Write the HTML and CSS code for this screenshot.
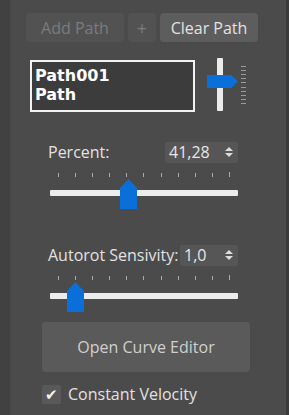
FILE: index.html
```html
<!DOCTYPE html>
<html lang="en">
<head>
    <meta charset="UTF-8">
    <meta name="viewport" content="width=device-width, initial-scale=1.0">
    <title>Path Constraint</title>
    <link rel="stylesheet" href="styles.css">
</head>
<body>
    <div class="panel">
        <div class="path-buttons">
            <button class="btn btn-add" disabled>Add Path</button>
            <button class="btn btn-plus" disabled>+</button>
            <button class="btn btn-clear">Clear Path</button>
        </div>

        <div class="path-row">
            <div class="path-list">
                <div class="path-item">Path001</div>
                <div class="path-item">Path</div>
            </div>
            <div class="vslider">
                <div class="vtrack"></div>
                <div class="vticks">
                    <span></span><span></span><span></span><span></span><span></span><span></span><span></span><span></span><span></span><span></span>
                </div>
                <div class="vthumb"></div>
            </div>
        </div>

        <div class="field-row percent-row">
            <label>Percent:</label>
            <div class="spinner spinner-wide">
                <span class="value">41,28</span>
                <span class="arrows"><i class="up"></i><i class="down"></i></span>
            </div>
        </div>
        <div class="hslider">
            <div class="hticks">
                <span></span><span></span><span></span><span></span><span></span><span></span><span></span><span></span><span></span><span></span><span></span>
            </div>
            <div class="htrack"></div>
            <div class="hthumb" style="left: 70px;"></div>
        </div>

        <div class="field-row autorot-row">
            <label>Autorot Sensivity:</label>
            <div class="spinner spinner-narrow">
                <span class="value">1,0</span>
                <span class="arrows"><i class="up"></i><i class="down"></i></span>
            </div>
        </div>
        <div class="hslider">
            <div class="hticks">
                <span></span><span></span><span></span><span></span><span></span><span></span><span></span><span></span><span></span><span></span><span></span>
            </div>
            <div class="htrack"></div>
            <div class="hthumb" style="left: 17px;"></div>
        </div>

        <button class="btn btn-curve">Open Curve Editor</button>

        <label class="check-row">
            <span class="checkbox">&#10004;</span>
            <span>Constant Velocity</span>
        </label>
    </div>
</body>
</html>
```

FILE: styles.css
```css
:root {
    --bg-color: #4b4b4b;
    --edge-color: #414141;
    --button-color: #5d5d5d;
    --text-color: #e2e2e2;
    --track-color: #ececec;
    --thumb-color: #0a6fd8;
}

* {
    box-sizing: border-box;
    margin: 0;
    padding: 0;
}

body {
    font-family: 'Open Sans', 'Noto Sans', sans-serif;
    font-size: 16px;
    color: var(--text-color);
    background-color: var(--edge-color);
    width: 289px;
    height: 415px;
    overflow: hidden;
}

.panel {
    width: 279px;
    height: 415px;
    margin-left: 10px;
    padding: 13px 0 0 15px;
    background-color: var(--bg-color);
    border-left: 1px solid #474747;
    border-right: 3px solid #3a3a3a;
}

.btn {
    font-family: inherit;
    font-size: 16px;
    border: none;
    border-radius: 4px;
    background-color: var(--button-color);
    color: var(--text-color);
}

.path-buttons {
    display: flex;
    gap: 4px;
    height: 29px;
}

.btn-add {
    width: 98px;
    background-color: #525252;
    color: #7c7c7c;
}

.btn-plus {
    width: 28px;
    background-color: #525252;
    color: #7c7c7c;
    font-size: 18px;
}

.btn-clear {
    width: 98px;
}

.path-row {
    display: flex;
    margin-top: 16px;
    height: 55px;
}

.path-list {
    width: 165px;
    height: 52px;
    margin: 2px 0 0 4px;
    border: 2px solid #f2f2f2;
    background-color: #3c3c3c;
    padding: 4px 3px 0;
    font-family: 'DejaVu Sans', sans-serif;
    font-weight: bold;
    font-size: 16px;
    line-height: 19px;
    color: #ffffff;
}

.vslider {
    position: relative;
    width: 42px;
    height: 54px;
    margin-left: 12px;
}

.vtrack {
    position: absolute;
    left: 10px;
    top: 0;
    width: 6px;
    height: 53px;
    background-color: var(--track-color);
    border-radius: 1px;
}

.vticks {
    position: absolute;
    left: 34px;
    top: 8px;
    display: flex;
    flex-direction: column;
    justify-content: space-between;
    height: 38px;
}

.vticks span {
    display: block;
    width: 5px;
    height: 1px;
    background-color: #9a9a9a;
}

.vthumb {
    position: absolute;
    left: 0;
    top: 17px;
    width: 31px;
    height: 13px;
    background-color: var(--thumb-color);
    clip-path: polygon(0 0, 78% 0, 100% 50%, 78% 100%, 0 100%);
}

.field-row {
    display: flex;
    align-items: center;
    justify-content: space-between;
    width: 190px;
    margin-left: 22px;
}

.percent-row {
    margin-top: 28px;
}

.autorot-row {
    margin-top: 26px;
}

.field-row label {
    color: var(--text-color);
    white-space: nowrap;
}

.spinner {
    display: flex;
    align-items: center;
    justify-content: space-between;
    flex-shrink: 0;
    height: 21px;
    background-color: #565656;
    border-radius: 2px;
    padding: 0 5px 0 4px;
}

.spinner-wide {
    width: 73px;
}

.spinner-narrow {
    width: 58px;
}

.spinner .value {
    color: #e6e6e6;
}

.arrows {
    display: flex;
    flex-direction: column;
    gap: 2px;
}

.arrows i {
    display: block;
    width: 0;
    height: 0;
    border-left: 4px solid transparent;
    border-right: 4px solid transparent;
}

.arrows .up {
    border-bottom: 4px solid #dcdcdc;
}

.arrows .down {
    border-top: 4px solid #dcdcdc;
}

.hslider {
    position: relative;
    width: 188px;
    height: 46px;
    margin: 9px 0 0 24px;
}

.hticks {
    display: flex;
    justify-content: space-between;
    margin: 0 8px 0 8px;
    height: 5px;
    align-items: flex-end;
}

.hticks span {
    display: block;
    width: 1px;
    height: 4px;
    background-color: #aaaaaa;
}

.hticks span:last-child {
    height: 5px;
}

.htrack {
    margin-top: 13px;
    height: 6px;
    background-color: var(--track-color);
    border-radius: 1px;
}

.hthumb {
    position: absolute;
    top: 7px;
    width: 17px;
    height: 30px;
    background-color: var(--thumb-color);
    clip-path: polygon(50% 0, 100% 30%, 100% 100%, 0 100%, 0 30%);
}

.btn-curve {
    display: block;
    width: 208px;
    height: 50px;
    margin: 1px 0 0 16px;
    color: #d0d0d0;
    background-color: #5a5a5a;
}

.check-row {
    display: flex;
    align-items: center;
    gap: 7px;
    margin: 11px 0 0 16px;
}

.checkbox {
    display: flex;
    align-items: center;
    justify-content: center;
    width: 19px;
    height: 19px;
    background-color: #595959;
    border-radius: 2px;
    color: #f4f4f4;
    font-size: 15px;
}
```
